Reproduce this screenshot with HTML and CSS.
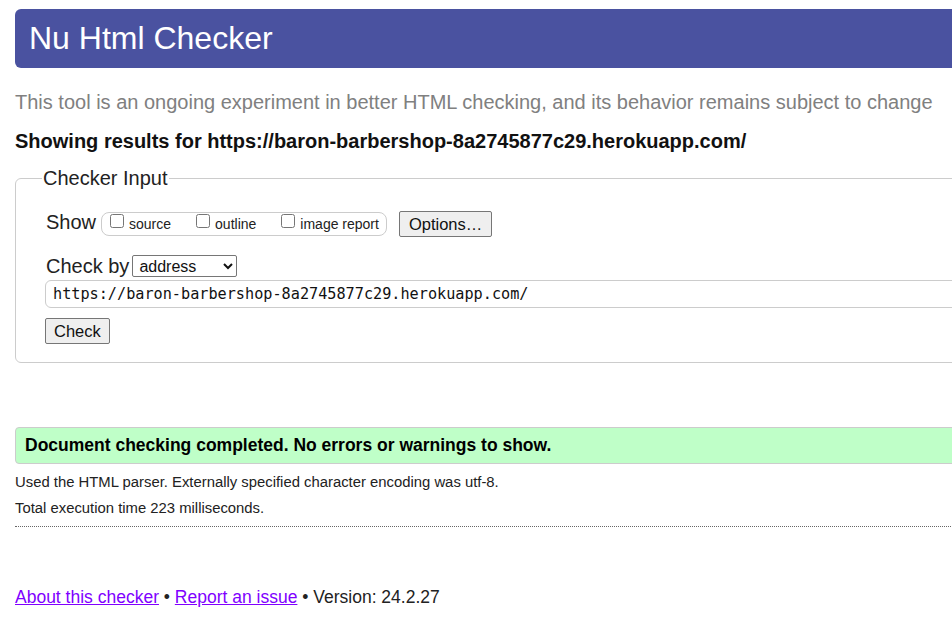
FILE: index.html
```html
<!DOCTYPE html>
<html lang="en">
<head>
<meta charset="utf-8">
<title>Nu Html Checker</title>
<link rel="stylesheet" href="styles.css">
</head>
<body>
<div class="page">
  <h1 class="banner">Nu Html Checker</h1>
  <p class="tagline">This tool is an ongoing experiment in better HTML checking, and its behavior remains subject to change</p>
  <p class="showing">Showing results for https://baron-barbershop-8a2745877c29.herokuapp.com/</p>
  <fieldset class="checker">
    <legend class="legend">Checker Input</legend>
    <div class="row show-row">
      <span class="label show-label">Show</span>
      <span class="opts">
        <label class="opt"><input type="checkbox" class="cb"><span>source</span></label>
        <label class="opt"><input type="checkbox" class="cb"><span>outline</span></label>
        <label class="opt"><input type="checkbox" class="cb"><span>image report</span></label>
      </span>
      <button class="btn options">Options…</button>
    </div>
    <div class="row by-row">
      <span class="label">Check by</span>
      <select class="sel"><option>address</option></select>
    </div>
    <input class="url" type="text" value="https://baron-barbershop-8a2745877c29.herokuapp.com/">
    <div class="row check-row"><button class="btn check">Check</button></div>
  </fieldset>
  <div class="success">Document checking completed. No errors or warnings to show.</div>
  <p class="info first">Used the HTML parser. Externally specified character encoding was utf-8.</p>
  <p class="info">Total execution time 223 milliseconds.</p>
  <hr class="dots">
  <p class="footer"><a href="#">About this checker</a> • <a href="#">Report an issue</a> • Version: 24.2.27</p>
</div>
</body>
</html>
```
FILE: styles.css
```css
html { overflow: hidden; }
body {
  margin: 0;
  background: #fff;
  color: #111;
  font-family: "Liberation Sans", Arial, sans-serif;
}
.page {
  width: 1200px;
  padding: 9px 15px 0 15px;
}
.banner {
  margin: 0;
  background: #4a52a0;
  color: #fff;
  font-weight: normal;
  font-size: 32px;
  line-height: 59px;
  height: 59px;
  padding: 0 14px;
  border-radius: 6px 0 0 6px;
}
.tagline {
  margin: 22px 0 0 0;
  font-size: 20px;
  line-height: 24px;
  color: #808080;
}
.showing {
  margin: 15px 0 0 0;
  font-size: 20px;
  font-weight: bold;
  line-height: 24px;
  color: #111;
}
.checker {
  margin: 13px 0 0 0;
  border: 1px solid #ccc;
  border-radius: 6px;
  padding: 21px 30px 18px 30px;
}
.legend {
  font-size: 20px;
  line-height: 24px;
  padding: 0 1px;
  margin-left: -4px;
  color: #222;
}
.row {
  display: flex;
  align-items: center;
}
.show-row { height: 26px; }
.label {
  font-size: 20px;
  color: #222;
}
.show-label { margin-top: -3px; }
.opts {
  display: inline-flex;
  align-items: center;
  gap: 25px;
  margin-left: 5px;
  box-sizing: border-box;
  border: 1px solid #ccc;
  border-radius: 8px;
  height: 24px;
  padding: 0 7px 0 8px;
  font-size: 14px;
}
.opt {
  display: inline-flex;
  align-items: center;
  gap: 5px;
  color: #222;
}
.cb {
  margin: 0;
  width: 14px;
  height: 14px;
  position: relative;
  top: -3px;
}
.btn {
  font-family: "Liberation Sans", Arial, sans-serif;
  font-size: 16.5px;
  color: #111;
  background: #efefef;
  border: 1px solid #767676;
  border-radius: 2px;
  height: 26px;
  padding: 0 9px;
}
.options { margin-left: 12px; }
.by-row {
  margin-top: 17px;
  height: 24px;
}
.sel {
  margin-left: 3px;
  font-family: "Liberation Sans", Arial, sans-serif;
  font-size: 16px;
  width: 105px;
  height: 22px;
  border: 1px solid #767676;
  border-radius: 2px;
  background: #fff;
  color: #111;
  padding: 0 2px;
}
.url {
  display: block;
  margin: 2px 0 0 -1px;
  width: 100%;
  box-sizing: border-box;
  height: 28px;
  border: 1px solid #ccc;
  border-radius: 6px;
  padding: 0 7px;
  font-family: "DejaVu Sans Mono", "Liberation Mono", monospace;
  font-size: 15.2px;
  color: #111;
}
.check-row { margin-top: 10px; }
.check {
  margin-left: -1px;
  padding: 0 8px;
}
.success {
  margin-top: 64px;
  background: #bfffc8;
  border: 1px solid #ccc;
  border-radius: 4px;
  height: 35px;
  line-height: 35px;
  padding: 0 9px;
  font-weight: bold;
  font-size: 17.5px;
  color: #000;
}
.info {
  margin: 9px 0 0 0;
  font-size: 14.85px;
  line-height: 17px;
  color: #222;
}
.info.first { margin-top: 9.5px; }
.dots {
  margin: 9.5px 0 0 0;
  border: 0;
  border-top: 1px dotted #666;
}
.footer {
  margin: 60px 0 0 0;
  font-size: 17.5px;
  line-height: 20px;
  color: #222;
}
.footer a { color: #8000ff; }
```
